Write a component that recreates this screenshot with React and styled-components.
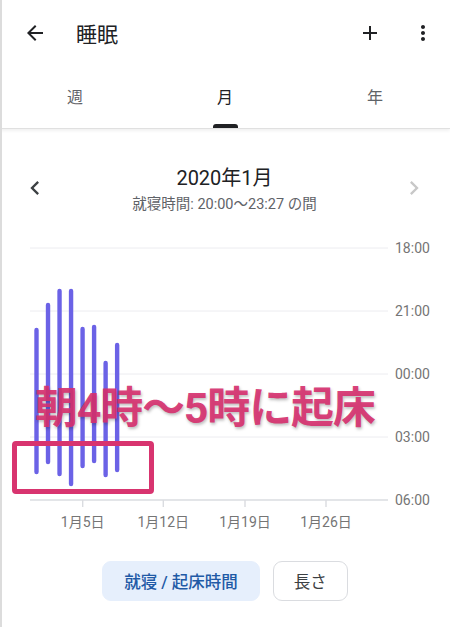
import React from 'react';
import styled, { createGlobalStyle } from 'styled-components';

const GlobalStyle = createGlobalStyle`
    html, body {
        margin: 0;
        padding: 0;
        background: #ffffff;
    }
    body {
        font-family: Roboto, "Noto Sans CJK JP", "Noto Sans", sans-serif;
        color: #202124;
    }
`;

const Page = styled.div`
    width: 450px;
    height: 627px;
    box-sizing: border-box;
    border-left: 2px solid #dcdcdc;
    overflow: hidden;
    background: #fff;
`;

const TopBar = styled.header`
    height: 66px;
    display: flex;
    align-items: center;
    padding: 0 15px 0 21px;
`;

const Title = styled.h1`
    margin: 0 0 0 29px;
    font-size: 21px;
    font-weight: 400;
    color: #202124;
    flex: 1;
`;

const IconButton = styled.div`
    width: ${({ size }) => size || 24}px;
    height: ${({ size }) => size || 24}px;
    display: flex;
    align-items: center;
    justify-content: center;
    margin-left: ${({ gap }) => gap || 0}px;
    color: ${({ color }) => color || '#202124'};
`;

const Tabs = styled.nav`
    height: 63px;
    box-sizing: border-box;
    display: grid;
    grid-template-columns: repeat(3, 1fr);
    border-bottom: 1px solid #e0e0e0;
    box-shadow: 0 2px 3px rgba(0, 0, 0, 0.06);
    margin-left: -2px;
`;

const Tab = styled.div`
    position: relative;
    display: flex;
    align-items: center;
    justify-content: center;
    font-size: 16px;
    padding-bottom: 2px;
    color: ${({ active }) => (active ? '#202124' : '#5f6368')};

    &::after {
        content: '';
        display: ${({ active }) => (active ? 'block' : 'none')};
        position: absolute;
        bottom: 0;
        left: 50%;
        width: 25px;
        height: 4px;
        margin-left: -12px;
        background: #202124;
        border-radius: 3px 3px 0 0;
    }
`;

const MonthNav = styled.section`
    height: 101px;
    display: flex;
    align-items: center;
    justify-content: space-between;
    padding: 16px 22px 0 19px;
    box-sizing: border-box;
`;

const MonthText = styled.div`
    display: flex;
    flex-direction: column;
    align-items: center;
    gap: 5px;
    margin-top: 5px;
`;

const MonthTitle = styled.div`
    font-size: 20px;
    line-height: 24px;
    color: #202124;
`;

const MonthSub = styled.div`
    font-size: 14.5px;
    line-height: 20px;
    color: #5f6368;
`;

const ChartArea = styled.div`
    position: relative;
    height: 310px;
    margin-left: -2px;

    svg {
        display: block;
    }
`;

const Callout = styled.div`
    position: absolute;
    left: 35px;
    top: 155px;
    font-size: 43px;
    line-height: 46px;
    font-weight: 700;
    letter-spacing: -1.2px;
    color: rgba(214, 48, 110, 0.93);
    text-shadow: 1px 2px 3px rgba(0, 0, 0, 0.25);
    white-space: nowrap;
`;

const Highlight = styled.div`
    position: absolute;
    left: 12px;
    top: 211px;
    width: 142px;
    height: 53px;
    box-sizing: border-box;
    border: 5px solid #d8346f;
    border-radius: 4px;
`;

const Toggles = styled.div`
    display: flex;
    justify-content: center;
    gap: 13px;
    margin-top: 21px;
    margin-left: -2px;
`;

const Chip = styled.div`
    height: 40px;
    padding: 0 ${({ active }) => (active ? 21 : 20)}px;
    box-sizing: border-box;
    display: flex;
    align-items: center;
    border-radius: 9px;
    font-size: 16.5px;
    font-weight: ${({ active }) => (active ? 500 : 400)};
    background: ${({ active }) => (active ? '#e6effc' : '#ffffff')};
    color: ${({ active }) => (active ? '#1f5aa6' : '#3c4043')};
    border: 1px solid ${({ active }) => (active ? '#e6effc' : '#dadce0')};
`;

const hours = ['18:00', '21:00', '00:00', '03:00', '06:00'];
const gridY = [248, 311, 374, 437, 500];

// 1月1日〜8日: [就寝y, 起床y]
const nights = [
    [330, 472],
    [305, 462],
    [291, 474],
    [291, 484],
    [329, 466],
    [327, 461],
    [363, 475],
    [345, 470],
];

const weeks = [
    { x: 82.7, label: '1月5日' },
    { x: 163.3, label: '1月12日' },
    { x: 245, label: '1月19日' },
    { x: 326, label: '1月26日' },
];

const SleepChart = () => (
    <svg width="450" height="310" viewBox="0 230 450 310">
        {gridY.map((y, i) => (
            <g key={y}>
                <line
                    x1="30"
                    x2="388"
                    y1={y}
                    y2={y}
                    stroke={i === 4 ? '#dadce0' : '#ececf0'}
                    strokeWidth={i === 4 ? 1.6 : 1}
                />
                <text
                    x="395"
                    y={y}
                    dominantBaseline="central"
                    fontSize="14"
                    fill="#757575"
                    fontFamily="Roboto, sans-serif"
                >
                    {hours[i]}
                </text>
            </g>
        ))}
        {weeks.map((w) => (
            <g key={w.label}>
                <line x1={w.x} x2={w.x} y1="500" y2="507" stroke="#dadce0" strokeWidth="1.4" />
                <text
                    x={w.x}
                    y="522"
                    textAnchor="middle"
                    dominantBaseline="central"
                    fontSize="14"
                    fill="#757575"
                    fontFamily="Roboto, 'Noto Sans CJK JP', sans-serif"
                >
                    {w.label}
                </text>
            </g>
        ))}
        {nights.map(([top, bottom], i) => {
            const x = 36.5 + i * 11.52;
            return (
                <line
                    key={i}
                    x1={x}
                    x2={x}
                    y1={top}
                    y2={bottom}
                    stroke="#6b62e6"
                    strokeWidth="4.4"
                    strokeLinecap="round"
                />
            );
        })}
    </svg>
);

const App = () => (
    <>
        <GlobalStyle />
        <Page>
            <TopBar>
                <IconButton>
                    <svg width="24" height="24" viewBox="0 0 24 24">
                        <path fill="currentColor" d="M20 11H7.83l5.59-5.59L12 4l-8 8 8 8 1.41-1.41L7.83 13H20v-2z" />
                    </svg>
                </IconButton>
                <Title>睡眠</Title>
                <IconButton>
                    <svg width="26" height="26" viewBox="0 0 24 24">
                        <path fill="currentColor" d="M19 13h-6v6h-2v-6H5v-2h6V5h2v6h6v2z" />
                    </svg>
                </IconButton>
                <IconButton gap={29}>
                    <svg width="24" height="24" viewBox="0 0 24 24">
                        <path
                            fill="currentColor"
                            d="M12 8c1.1 0 2-.9 2-2s-.9-2-2-2-2 .9-2 2 .9 2 2 2zm0 2c-1.1 0-2 .9-2 2s.9 2 2 2 2-.9 2-2-.9-2-2-2zm0 6c-1.1 0-2 .9-2 2s.9 2 2 2 2-.9 2-2-.9-2-2-2z"
                        />
                    </svg>
                </IconButton>
            </TopBar>

            <Tabs>
                <Tab>週</Tab>
                <Tab active>月</Tab>
                <Tab>年</Tab>
            </Tabs>

            <MonthNav>
                <IconButton size={28} color="#3c4043">
                    <svg width="28" height="28" viewBox="0 0 24 24">
                        <path fill="currentColor" d="M15.41 7.41L14 6l-6 6 6 6 1.41-1.41L10.83 12z" />
                    </svg>
                </IconButton>
                <MonthText>
                    <MonthTitle>2020年1月</MonthTitle>
                    <MonthSub>就寝時間: 20:00〜23:27 の間</MonthSub>
                </MonthText>
                <IconButton size={28} color="#c8c8c8">
                    <svg width="28" height="28" viewBox="0 0 24 24">
                        <path fill="currentColor" d="M10 6L8.59 7.41 13.17 12l-4.58 4.59L10 18l6-6z" />
                    </svg>
                </IconButton>
            </MonthNav>

            <ChartArea>
                <SleepChart />
                <Callout>朝4時〜5時に起床</Callout>
                <Highlight />
            </ChartArea>

            <Toggles>
                <Chip active>就寝 / 起床時間</Chip>
                <Chip>長さ</Chip>
            </Toggles>
        </Page>
    </>
);

export default App;
